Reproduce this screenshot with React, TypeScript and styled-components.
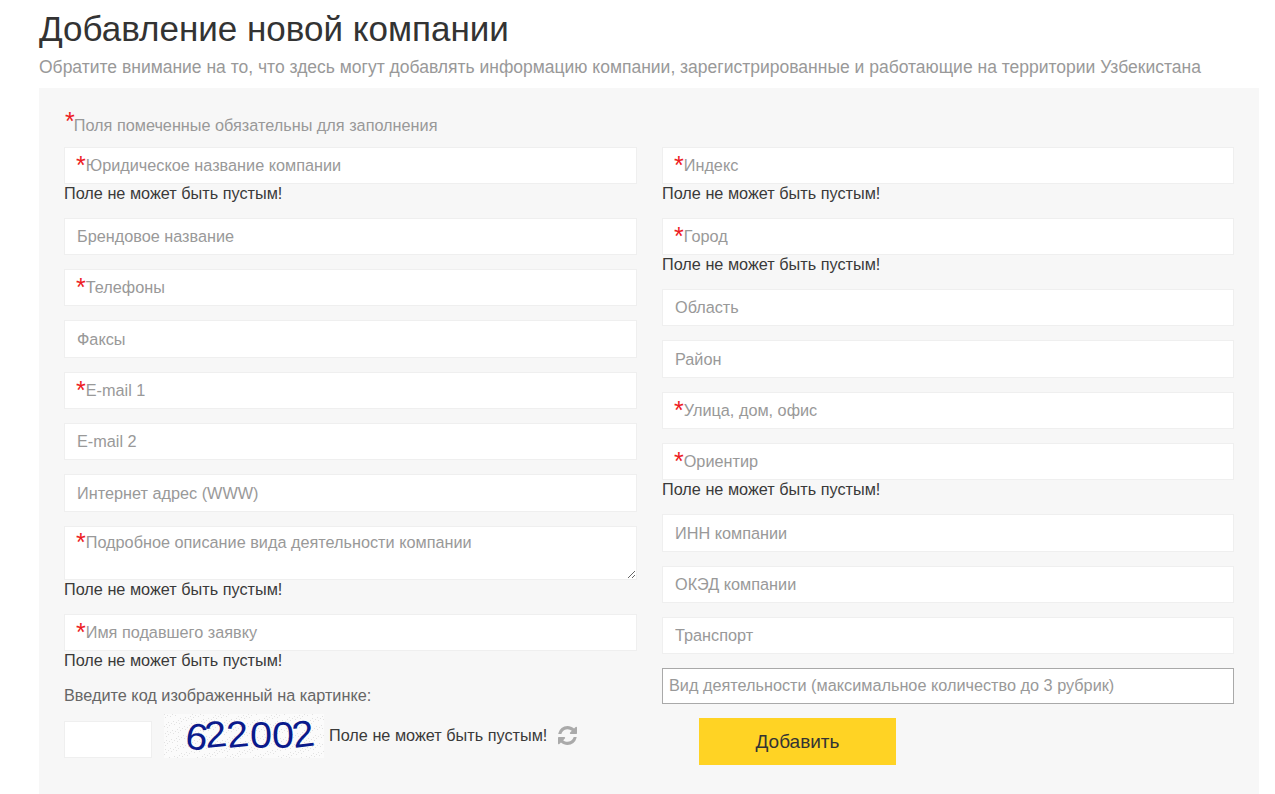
import styled, { createGlobalStyle } from 'styled-components'

const GlobalStyle = createGlobalStyle`
  html, body {
    margin: 0;
    padding: 0;
    background: #fff;
    overflow: hidden;
  }
  body {
    font-family: "Liberation Sans", Arial, sans-serif;
  }
`

const Page = styled.div`
  width: 1275px;
  height: 794px;
  padding: 9px 16px 0 39px;
  box-sizing: border-box;
  overflow: hidden;
`

const Title = styled.h1`
  margin: 0;
  font-size: 35px;
  line-height: 39px;
  font-weight: 400;
  color: #333;
`

const Subtitle = styled.p`
  margin: 8px 0 0;
  font-size: 17.5px;
  line-height: 22px;
  color: #999;
`

const Panel = styled.form`
  margin-top: 10px;
  height: 706px;
  padding: 21px 25px 0;
  box-sizing: border-box;
  background: #f7f7f7;
`

const Legend = styled.div`
  height: 37.6px;
  margin-left: 1px;
  font-size: 16.25px;
  line-height: 32px;
  color: #999;
`

const Star = styled.span`
  color: #ed1c24;
  font-size: 25px;
  line-height: 16px;
  vertical-align: -3px;
`

const LegendStar = styled(Star)`
  margin-right: -1px;
  vertical-align: 1px;
`

const Columns = styled.div`
  display: grid;
  grid-template-columns: 573px 572px;
  column-gap: 25px;
  align-items: start;
`

const Column = styled.div`
  display: flex;
  flex-direction: column;
`

const FieldWrap = styled.div<{ $hasError?: boolean }>`
  position: relative;
  margin-bottom: ${(p) => (p.$hasError ? '0' : '14px')};
`

const TextInput = styled.input`
  display: block;
  width: 100%;
  height: 37.3px;
  padding: 0.3px 12px 0;
  box-sizing: border-box;
  background: #fff;
  border: 1px solid #efefef;
  border-radius: 0;
  outline: none;
  font-family: inherit;
  font-size: 16.25px;
  color: #333;

  &::placeholder {
    color: #999;
    opacity: 1;
  }
`

const TextArea = styled.textarea`
  display: block;
  width: 100%;
  height: 54px;
  padding: 8px 13px;
  box-sizing: border-box;
  background: #fff;
  border: 1px solid #efefef;
  border-radius: 0;
  outline: none;
  font-family: inherit;
  font-size: 16px;
`

const FieldLabel = styled.label<{ $top?: number }>`
  position: absolute;
  top: ${(p) => p.$top ?? 9.15}px;
  left: 12px;
  font-size: 16.25px;
  line-height: 18px;
  color: #999;
  pointer-events: none;
`

const ErrorText = styled.div`
  height: 20px;
  margin-bottom: 14px;
  font-size: 16.25px;
  line-height: 19.4px;
  color: #3a3a3a;
`

const CaptchaLabel = styled.div`
  font-size: 16.25px;
  line-height: 20px;
  color: #666;
`

const CaptchaRow = styled.div`
  display: flex;
  align-items: center;
  margin-top: 9px;
`

const CaptchaInput = styled.input`
  align-self: flex-end;
  width: 88px;
  height: 37px;
  box-sizing: border-box;
  background: #fff;
  border: 1px solid #efefef;
  outline: none;
`

const CaptchaImage = styled.svg`
  display: block;
  width: 160px;
  height: 44px;
  margin-left: 12px;
  overflow: visible;
`

const CaptchaError = styled.span`
  margin-left: 5px;
  font-size: 16.25px;
  color: #3a3a3a;
`

const RefreshIcon = styled.svg`
  width: 19px;
  height: 19px;
  margin-left: 11px;
  fill: #aaa;
`

const SelectBox = styled.div`
  height: 36px;
  padding: 0 6px;
  box-sizing: border-box;
  background: #fff;
  border: 1px solid #a9a9a9;
  font-size: 16.25px;
  line-height: 33px;
  color: #999;
`

const SubmitButton = styled.button`
  width: 197px;
  height: 47px;
  margin: 14px 0 0 37px;
  padding: 0;
  background: #ffd324;
  border: none;
  font-family: inherit;
  font-size: 19px;
  color: #333;
`

type FieldDef = { label: string; required?: boolean; error?: boolean }

const leftFields: FieldDef[] = [
  { label: 'Юридическое название компании', required: true, error: true },
  { label: 'Брендовое название' },
  { label: 'Телефоны', required: true },
  { label: 'Факсы' },
  { label: 'E-mail 1', required: true },
  { label: 'E-mail 2' },
  { label: 'Интернет адрес (WWW)' },
]

const rightFields: FieldDef[] = [
  { label: 'Индекс', required: true, error: true },
  { label: 'Город', required: true, error: true },
  { label: 'Область' },
  { label: 'Район' },
  { label: 'Улица, дом, офис', required: true },
  { label: 'Ориентир', required: true, error: true },
  { label: 'ИНН компании' },
  { label: 'ОКЭД компании' },
  { label: 'Транспорт' },
]

const ERROR_MESSAGE = 'Поле не может быть пустым!'

function Field({ label, required, error }: FieldDef) {
  return (
    <>
      <FieldWrap $hasError={error}>
        <TextInput placeholder={required ? undefined : label} />
        {required && (
          <FieldLabel>
            <Star>*</Star>
            {label}
          </FieldLabel>
        )}
      </FieldWrap>
      {error && <ErrorText>{ERROR_MESSAGE}</ErrorText>}
    </>
  )
}

// noise dots for the captcha background
const noise = Array.from({ length: 520 }, (_, i) => ({
  x: (i * 37) % 160,
  y: (i * 23) % 44,
}))

function Captcha() {
  return (
    <CaptchaImage viewBox="0 0 160 44">
      <rect width="160" height="44" fill="#fbfbfb" />
      {noise.map((d, i) => (
        <rect key={i} x={d.x} y={d.y} width="1" height="1" fill="#e2e2e2" />
      ))}
      <text
        x="20"
        y="34"
        fontFamily="Liberation Sans"
        fontSize="37"
        fill="#0a1a8c"
        rotate="8 -6 -6 0 0 -8"
        textLength="132"
        lengthAdjust="spacingAndGlyphs"
      >
        622002
      </text>
    </CaptchaImage>
  )
}

export default function App() {
  return (
    <>
      <GlobalStyle />
      <Page>
        <Title>Добавление новой компании</Title>
        <Subtitle>
          Обратите внимание на то, что здесь могут добавлять информацию компании,
          зарегистрированные и работающие на территории Узбекистана
        </Subtitle>
        <Panel>
          <Legend>
            <LegendStar>*</LegendStar>Поля помеченные обязательны для заполнения
          </Legend>
          <Columns>
            <Column>
              {leftFields.map((f) => (
                <Field key={f.label} {...f} />
              ))}
              <FieldWrap $hasError>
                <TextArea />
                <FieldLabel $top={7}>
                  <Star>*</Star>Подробное описание вида деятельности компании
                </FieldLabel>
              </FieldWrap>
              <ErrorText>{ERROR_MESSAGE}</ErrorText>
              <Field label="Имя подавшего заявку" required error />
              <CaptchaLabel>Введите код изображенный на картинке:</CaptchaLabel>
              <CaptchaRow>
                <CaptchaInput />
                <Captcha />
                <CaptchaError>{ERROR_MESSAGE}</CaptchaError>
                <RefreshIcon viewBox="0 0 1536 1536">
                  <path d="M1511 928q0 5-1 7-64 268-268 434.5t-478 166.5q-146 0-282.5-55t-243.5-157l-129 129q-19 19-45 19t-45-19-19-45v-448q0-26 19-45t45-19h448q26 0 45 19t19 45-19 45l-137 137q71 66 161 102t187 36q134 0 250-65t186-179q11-17 53-117 8-23 30-23h192q13 0 22.5 9.5t9.5 22.5zm25-800v448q0 26-19 45t-45 19h-448q-26 0-45-19t-19-45 19-45l138-138q-148-137-349-137-134 0-250 65t-186 179q-11 17-53 117-8 23-30 23h-199q-13 0-22.5-9.5t-9.5-22.5v-7q65-268 270-434.5t480-166.5q146 0 284 55.5t245 156.5l130-129q19-19 45-19t45 19 19 45z" />
                </RefreshIcon>
              </CaptchaRow>
            </Column>
            <Column>
              {rightFields.map((f) => (
                <Field key={f.label} {...f} />
              ))}
              <SelectBox>Вид деятельности (максимальное количество до 3 рубрик)</SelectBox>
              <SubmitButton type="button">Добавить</SubmitButton>
            </Column>
          </Columns>
        </Panel>
      </Page>
    </>
  )
}
